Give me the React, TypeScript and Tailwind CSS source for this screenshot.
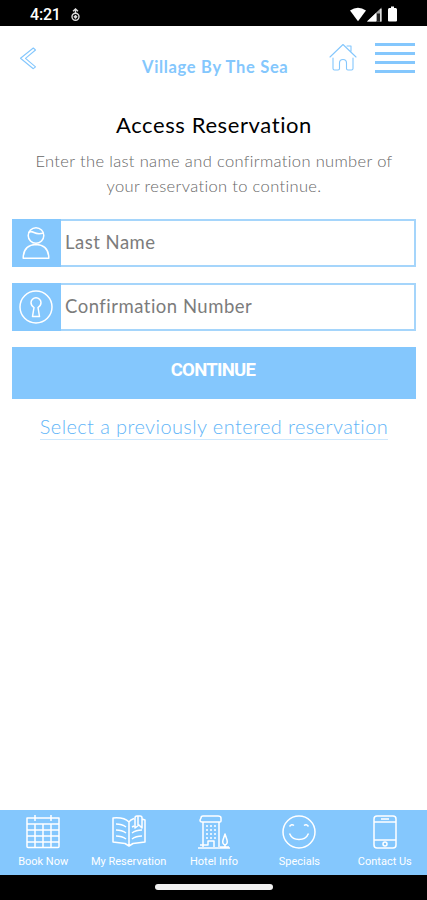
import React from "react";

function StatusBar() {
  return (
    <div className="flex h-[26px] shrink-0 items-center bg-black pl-[30px] pr-[28px] text-white">
      <span className="mt-[4px] w-[32px] whitespace-nowrap font-['Roboto',sans-serif] text-[16px] font-medium leading-[20px] tracking-[-0.2px]">4:21</span>
      <svg className="ml-[8px] mt-[3px]" width="11" height="14" viewBox="0 0 11 14" fill="none" stroke="#ddd" strokeWidth="1.4">
        <circle cx="5.5" cy="8.8" r="3.5" />
        <path d="M3 3.2 5.5 1 8 3.2M5.5 1v4" />
        <path d="M5.5 6.700 7.600 8.800 5.500 10.900 3.400 8.800Z" fill="#ddd" stroke="none" />
      </svg>
      <svg className="ml-auto mt-[3px]" width="50" height="17" viewBox="0 0 50 17">
        <path d="M1 4.5Q9 -1 17 4.5L9 15.3Z" fill="#fff" />
        <path d="M18 15.5 32.5 1.5V15.5Z" fill="#aaa" />
        <path d="M18 15.5 27 7V15.5Z" fill="#fff" />
        <path d="M28 7.5h3v8h-3z" fill="#222" />
        <path d="M31 3h1.5v12.5H31z" fill="#ddd" />
        <path d="M40 2h2V.5h3V2h2q1 .5 1 1.5v11q0 1-1 1h-7q-1 0-1-1v-11Q39 2.500 40 2Z" fill="#fff" />
      </svg>
    </div>
  );
}

function Header() {
  return (
    <header className="flex h-[76px] shrink-0 items-start pl-[19px] pr-[12px] text-[#84c7fd]">
      <svg className="mt-[21px]" width="18" height="23" viewBox="0 0 18 23" fill="none" stroke="currentColor" strokeWidth="1.1" strokeLinejoin="round">
        <path d="M14.300 1 1.500 11.300 14.300 21.700 16.500 19.800 6.500 11.300 16.500 3Z" />
      </svg>
      <h1 className="ml-[105px] mt-[29px] w-[180px] whitespace-nowrap font-['Lato',sans-serif] text-[16.5px] font-bold leading-[24px] tracking-[0.68px]">Village By The Sea</h1>
      <svg className="ml-[7px] mt-[17px]" width="28" height="28" viewBox="0 0 28 28" fill="none" stroke="currentColor" strokeWidth="1.1" strokeLinecap="round" strokeLinejoin="round">
        <path d="M1 14 14 1.500 27 14M18 3h4v5M4 15v10.500q0 1.500 1.500 1.500H9q1.500 0 1.500-1.500V20q0-3.500 3.500-3.500t3.500 3.500v5.500q0 1.500 1.500 1.500h3.500q1.500 0 1.500-1.500V15" />
      </svg>
      <div className="ml-auto mt-[17px] flex w-[40px] flex-col gap-[6px]">
        <span className="h-[3px] bg-[#84c7fd]" />
        <span className="h-[3px] bg-[#84c7fd]" />
        <span className="h-[3px] bg-[#84c7fd]" />
        <span className="h-[3px] bg-[#84c7fd]" />
      </div>
    </header>
  );
}

function Field({ icon, label }: { icon: React.ReactNode; label: string }) {
  return (
    <label className="flex h-[48px] w-full border-2 border-[#a5d5fb] bg-white">
      <span className="-my-[2px] -ml-[2px] flex w-[49px] shrink-0 items-center bg-[#84c7fd] text-white">{icon}</span>
      <input
        placeholder={label}
        className="min-w-0 flex-1 bg-transparent pl-[4px] font-['Lato',sans-serif] text-[18.5px] tracking-[0.5px] text-[#7c7c7c] outline-none placeholder:text-[#7c7c7c]"
      />
    </label>
  );
}

const PersonIcon = (
  <svg className="ml-[10px]" width="28" height="34" viewBox="0 0 28 34" fill="none" stroke="currentColor" strokeWidth="1.5" strokeLinejoin="round">
    <circle cx="14" cy="9.500" r="7.800" />
    <path d="M6.500 7Q8 4.500 12 6.500T21.500 7M1.200 32.300Q1.200 19 14 18.500 26.800 19 26.800 32.300Z" />
  </svg>
);

const KeyholeIcon = (
  <svg className="ml-[7px]" width="34" height="34" viewBox="0 0 34 34" fill="none" stroke="currentColor" strokeWidth="1.5" strokeLinejoin="round">
    <circle cx="17" cy="17" r="16" />
    <path d="M15 17.500Q12 15.500 12 12.800A5 5 0 0 1 22 12.800Q22 15.500 19 17.500L20.500 26.500h-7Z" />
  </svg>
);

const tabs = [
  {
    label: "Book Now",
    icon: <path d="M1 3h32v28.500q0 1-1 1H2q-1 0-1-1ZM1 9h32M1 15h32M1 21h32M1 27h32M9 9v23M17 9v23M25 9v23M9 0v6M25 0v6" />,
  },
  {
    label: "My Reservation",
    icon: <path d="M17 31 13 28.500 1 27V3q11-1 16 4 1-2 5-3.500M30 4l3 1v22l-12 1.500-4 2.500V7M23 3q0-2 2-2h3q2 0 2 2v10l-3-3-4 3ZM26 1v9M4 9q6 0 10 3M4 15q6 0 10 3M4 21q6 0 10 3M30 15q-6 0-10 3M30 21q-6 0-10 3M20 12l2-1" />,
  },
  {
    label: "Hotel Info",
    icon: <path d="M4 3q0-2 2-2h15q3 0 3 2v3q0 1-1 1H5q-2 0-2-2ZM6 7v25M22 7v25M1 33h32M3 30h8v-4h6v6M9 11h2M13 11h2M17 11h2M9 15h2M13 15h2M17 15h2M9 19h2M13 19h2M17 19h2M9 23h2M13 23h2M17 23h2M28 33v-4M28 30q-3-1-2-5l2-6 2 6q1 4-2 5M23 32h9" />,
  },
  {
    label: "Specials",
    icon: <path d="M33 17A16 16 0 1 1 1 17 16 16 0 0 1 33 17ZM7.500 18.500Q10 24.500 17 24.500t9.500-6M7.500 11.500q2-3 4.500-1M22 10.500q2.500-2 4.500 1" />,
  },
  {
    label: "Contact Us",
    icon: <path d="M9 1h16q3 0 3 3v26q0 3-3 3H9q-3 0-3-3V4q0-3 3-3ZM6 7h22M6 25h22M13 4h8M19 29a2 2 0 1 1-4 0 2 2 0 0 1 4 0Z" />,
  },
];

function TabBar() {
  return (
    <nav className="grid h-[65px] shrink-0 grid-cols-5 bg-[#84c7fd] text-white">
      {tabs.map((tab) => (
        <div key={tab.label} className="flex flex-col items-center pl-px pt-[5px]">
          <svg width="34" height="34" viewBox="0 0 34 34" fill="none" stroke="currentColor" strokeWidth="1.5" strokeLinejoin="round">
            {tab.icon}
          </svg>
          <span className="mt-[6px] whitespace-nowrap font-['Roboto',sans-serif] text-[11px] leading-[14px]">{tab.label}</span>
        </div>
      ))}
    </nav>
  );
}

export default function App() {
  return (
    <div className="flex h-[900px] w-full flex-col overflow-hidden bg-white">
      <StatusBar />
      <Header />
      <main className="flex flex-1 flex-col items-center pl-[12px] pr-[11px] pt-[8px]">
        <h2 className="whitespace-nowrap font-['Lato',sans-serif] text-[22px] leading-[30px] tracking-[0.6px] text-black">Access Reservation</h2>
        <p className="mt-[9px] whitespace-nowrap text-center font-['Lato',sans-serif] text-[16.5px] font-light leading-[25px] tracking-[0.35px] text-[#666]">
          Enter the last name and confirmation number of
          <br />
          your reservation to continue.
        </p>
        <div className="mt-[20px] flex w-full flex-col gap-[16px]">
          <Field icon={PersonIcon} label="Last Name" />
          <Field icon={KeyholeIcon} label="Confirmation Number" />
        </div>
        <button className="mt-[16px] flex h-[52px] w-full justify-center bg-[#84c7fd] pr-[2px] pt-[11px] font-['Roboto',sans-serif] text-[18.5px] font-bold leading-[24px] tracking-[-0.7px] text-white">CONTINUE</button>
        <a className="mt-[15px] whitespace-nowrap border-b border-[#cfe8fc] font-['Lato',sans-serif] text-[20px] font-light leading-[25px] tracking-[0.4px] text-[#62b5f8]">Select a previously entered reservation</a>
      </main>
      <TabBar />
      <div className="flex h-[25px] shrink-0 justify-center bg-black pt-[9px]">
        <span className="h-[6px] w-[118px] rounded-sm bg-[#f1f1f1]" />
      </div>
    </div>
  );
}
